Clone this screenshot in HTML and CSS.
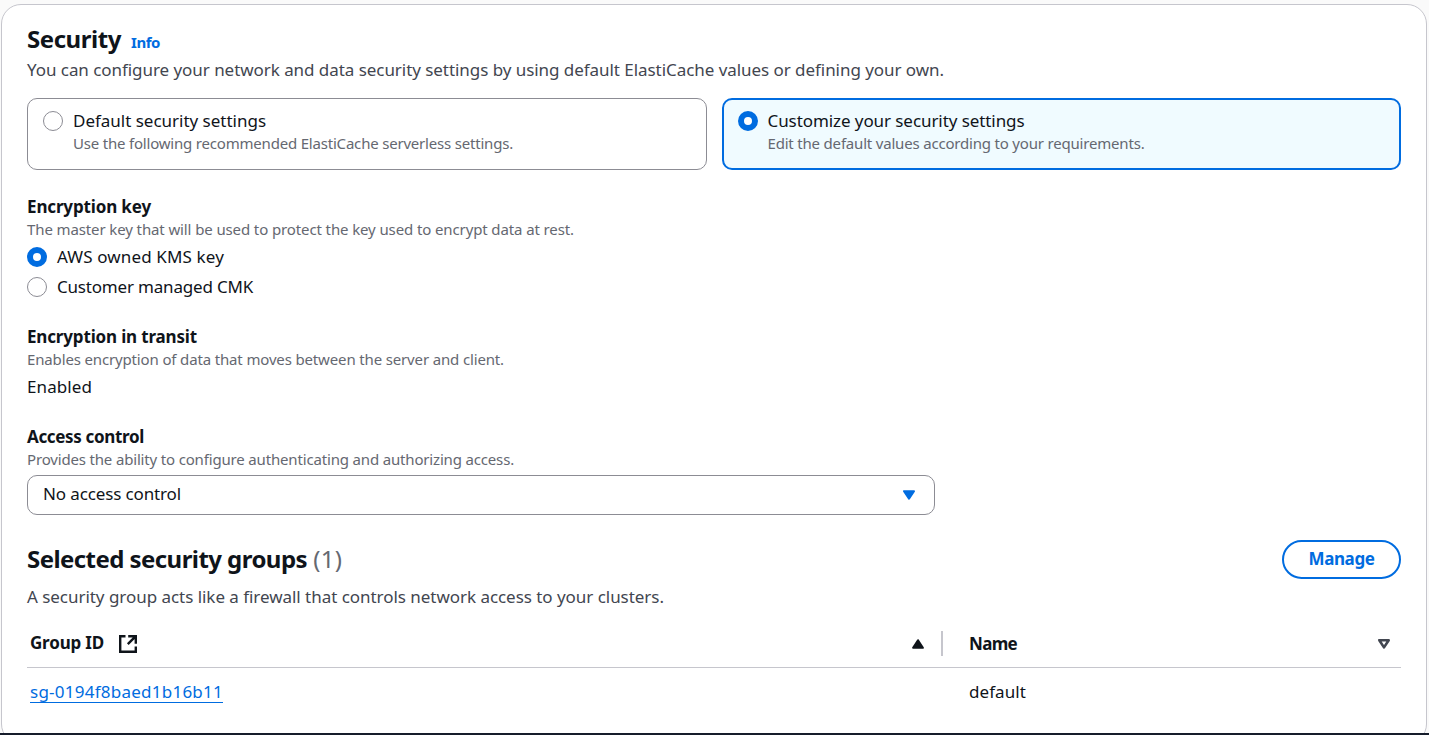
FILE: index.html
```html
<!DOCTYPE html>
<html lang="en">
<head>
<meta charset="utf-8">
<title>Security</title>
<link rel="stylesheet" href="styles.css">
</head>
<body>
<main class="card">
  <header>
    <div class="title-row">
      <h2 class="title t-security">Security</h2>
      <a class="info">Info</a>
    </div>
    <p class="lead t-lead">You can configure your network and data security settings by using default ElastiCache values or defining your own.</p>
  </header>

  <div class="tiles">
    <label class="tile">
      <span class="radio"></span>
      <span class="tile-text">
        <span class="label t-default">Default security settings</span>
        <span class="hint t-use">Use the following recommended ElastiCache serverless settings.</span>
      </span>
    </label>
    <label class="tile tile-selected">
      <span class="radio radio-on"></span>
      <span class="tile-text">
        <span class="label t-customize">Customize your security settings</span>
        <span class="hint t-edit">Edit the default values according to your requirements.</span>
      </span>
    </label>
  </div>

  <div class="fields">
    <section>
      <h3 class="field-title t-key">Encryption key</h3>
      <p class="hint t-master">The master key that will be used to protect the key used to encrypt data at rest.</p>
      <div class="field-body">
        <label class="option"><span class="radio radio-on"></span><span class="label t-aws">AWS owned KMS key</span></label>
        <label class="option"><span class="radio"></span><span class="label t-cmk">Customer managed CMK</span></label>
      </div>
    </section>

    <section>
      <h3 class="field-title t-transit">Encryption in transit</h3>
      <p class="hint t-enables">Enables encryption of data that moves between the server and client.</p>
      <div class="field-body"><span class="label t-enabled">Enabled</span></div>
    </section>

    <section>
      <h3 class="field-title t-access">Access control</h3>
      <p class="hint t-provides">Provides the ability to configure authenticating and authorizing access.</p>
      <div class="select">
        <span class="label t-none">No access control</span>
        <svg class="caret" viewBox="0 0 16 12"><path d="M3 2.2h10L8 9.6z" fill="#006ce0" stroke="#006ce0" stroke-width="2" stroke-linejoin="round"/></svg>
      </div>
    </section>
  </div>

  <section class="groups">
    <div class="groups-head">
      <h2 class="title"><span class="t-selected">Selected security groups</span> <span class="count">(1)</span></h2>
      <button class="manage">Manage</button>
    </div>
    <p class="lead t-firewall">A security group acts like a firewall that controls network access to your clusters.</p>
    <div class="table">
      <div class="row row-head">
        <div class="cell cell-sorted">
          <span class="th t-group">Group ID</span>
          <svg class="external" viewBox="0 0 20 20" fill="none" stroke="#0f141a" stroke-width="2.4"><path d="M7.5 2.2H2.2v15.6h15.6v-5.3M10.2 2.2h7.6v7.6M17.8 2.2l-8 8"/></svg>
          <svg class="sort" viewBox="0 0 14 12"><path d="M7 2.2L11.9 9.8H2.1z" fill="#0f141a" stroke="#0f141a" stroke-width="2" stroke-linejoin="round"/></svg>
        </div>
        <div class="cell cell-name">
          <span class="th th-muted t-name">Name</span>
          <svg class="sort" viewBox="0 0 14 12"><path d="M2.3 2.2h9.4L7 9.4z" fill="none" stroke="#424650" stroke-width="2.6" stroke-linejoin="round"/></svg>
        </div>
      </div>
      <div class="row row-body">
        <div class="cell"><a class="link">sg-0194f8baed1b16b11</a></div>
        <div class="cell cell-name"><span class="label t-defaultgroup">default</span></div>
      </div>
    </div>
  </section>
</main>
<div class="footer-edge"></div>
</body>
</html>
```

FILE: styles.css
```css
* { box-sizing: border-box; margin: 0; padding: 0; }

body {
  height: 735px;
  overflow: hidden;
  background: #fafafa;
  color: #0f141a;
  font: 17px/25px "Noto Sans", "Open Sans", sans-serif;
  white-space: nowrap;
}

.card {
  height: 740px;
  margin: 4px 2px 0 1px;
  padding: 19px 25px 0;
  border: 1px solid #c6c6cd;
  border-radius: 20px;
  background: #fff;
}

.title-row { display: flex; align-items: baseline; gap: 10px; height: 33px; }
.title { font-size: 24px; line-height: 30px; font-weight: 700; }
.info { font-size: 15px; font-weight: 700; color: #006ce0; letter-spacing: -.44px; }
.lead { color: #424650; }

.tiles { display: grid; grid-template-columns: 1fr 1fr; gap: 15px; margin-top: 16px; }
.tile {
  display: flex;
  gap: 10px;
  height: 72px;
  padding: 9px 15px;
  border: 1px solid #8c8c94;
  border-radius: 10px;
}
.tile-selected { padding: 8px 14px; border: 2px solid #006ce0; background: #f0fbff; }
.tile-text { display: flex; flex-direction: column; }

.radio {
  flex: none;
  width: 20px;
  height: 20px;
  margin-top: 3px;
  border: 1px solid #8c8c94;
  border-radius: 50%;
  background: #fff;
}
.radio-on { border: 6px solid #006ce0; }

.label { line-height: 25px; }
.hint { font-size: 15px; line-height: 20px; color: #656871; }

.fields { display: flex; flex-direction: column; gap: 25px; margin-top: 24px; }
.field-title { font-size: 17px; line-height: 25px; font-weight: 700; }
.field-body { display: flex; flex-direction: column; gap: 5px; margin-top: 5px; }
.option { display: flex; gap: 10px; }

.select {
  display: flex;
  justify-content: space-between;
  width: 908px;
  height: 40px;
  margin-top: 6px;
  padding: 5px 17px 0 15px;
  border: 1px solid #8c8c94;
  border-radius: 10px;
}
.caret { width: 16px; height: 12px; margin-top: 8px; }

.groups { margin-top: 25px; }
.groups-head { display: flex; justify-content: space-between; height: 39px; }
.groups-head .title { margin-top: 4px; }
.count { color: #656871; font-weight: 400; letter-spacing: .3px; }
.manage {
  width: 119px;
  height: 39px;
  padding-bottom: 2px;
  border: 2px solid #006ce0;
  border-radius: 20px;
  background: #fff;
  color: #006ce0;
  font: 700 17px/25px "Noto Sans", "Open Sans", sans-serif;
  letter-spacing: -.39px;
}
.groups .lead { margin-top: 5px; }

.row { display: grid; grid-template-columns: 916px 1fr; }
.row-head { height: 59px; border-bottom: 1px solid #c6c6cd; }
.row-body { height: 47px; }
.cell { display: flex; align-items: center; padding-left: 3px; }
.cell-name { padding-left: 26px; }
.row-head .cell { align-self: end; height: 25px; margin-bottom: 11px; }
.cell-sorted { border-right: 2px solid #c6c6cd; }
.th { font-weight: 700; line-height: 25px; padding-bottom: 1px; }
.t-group { padding-bottom: 3px; }
.external { width: 20px; height: 20px; margin-left: 14px; }
.sort { width: 14px; height: 12px; margin-left: auto; }
.cell-sorted .sort { margin-right: 16px; }
.cell-name .sort { margin-right: 10px; }
.link {
  height: 23px;
  border-bottom: 1px solid #006ce0;
  color: #006ce0;
  line-height: 23px;
  letter-spacing: .245px;
}

.footer-edge {
  position: absolute;
  left: 0;
  right: 0;
  top: 733px;
  height: 2px;
  background: #161d2b;
}

/* Per-string tracking */
.t-security { letter-spacing: -.445px; }
.t-lead { letter-spacing: -.052px; }
.t-default { letter-spacing: -.014px; }
.t-use { letter-spacing: -.196px; }
.t-customize { letter-spacing: -.079px; }
.t-edit { letter-spacing: -.19px; }
.t-key { letter-spacing: -.144px; }
.t-master { letter-spacing: -.114px; }
.t-aws { letter-spacing: .134px; }
.t-cmk { letter-spacing: -.191px; }
.t-transit { letter-spacing: -.161px; }
.t-enables { letter-spacing: -.148px; }
.t-enabled { letter-spacing: .087px; }
.t-access { letter-spacing: -.338px; }
.t-provides { letter-spacing: -.166px; }
.t-none { letter-spacing: -.131px; }
.t-selected { letter-spacing: -.56px; }
.t-firewall { letter-spacing: -.039px; }
.t-group { letter-spacing: -.184px; }
.t-name { letter-spacing: -.684px; }
.t-defaultgroup { letter-spacing: .076px; }
```
